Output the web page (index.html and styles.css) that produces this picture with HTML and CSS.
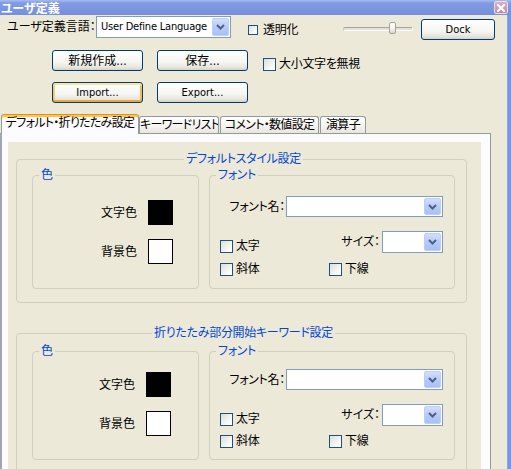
FILE: index.html
```html
<!DOCTYPE html>
<html lang="ja">
<head>
<meta charset="utf-8">
<title>ユーザ定義</title>
<link rel="stylesheet" href="styles.css">
</head>
<body>
<div class="window">
  <div class="titlebar">
    <span class="title">ユーザ定義</span>
    <span class="close"><svg width="8" height="8" viewBox="0 0 8 8"><path d="M1 1L7 7M7 1L1 7" stroke="#fff" stroke-width="2" stroke-linecap="square"/></svg></span>
  </div>
  <div class="frame">
    <div class="client">
      <div class="row row1">
        <span class="lang-lbl">ユーザ定義言語：</span>
        <div class="combo lang-combo"><span class="combo-text en">User Define Language</span><span class="combo-btn"><svg width="9" height="6" viewBox="0 0 9 6"><path d="M1 1l3.5 3.5L8 1" fill="none" stroke="#4D6185" stroke-width="2"/></svg></span></div>
        <label class="chk trans-chk"><span class="box small"></span><span class="chk-text">透明化</span></label>
        <div class="slider"><div class="track"></div><div class="thumb"></div></div>
        <button class="btn en dock">Dock</button>
      </div>
      <div class="row row2">
        <button class="btn first">新規作成...</button>
        <button class="btn">保存...</button>
        <label class="chk case-chk"><span class="box"></span><span class="chk-text">大小文字を無視</span></label>
      </div>
      <div class="row row3">
        <button class="btn en first focused">Import...</button>
        <button class="btn en">Export...</button>
      </div>
      <div class="tabs">
        <div class="tab active">デフォルト・折りたたみ設定</div>
        <div class="tab t2">キーワードリスト</div>
        <div class="tab t3">コメント・数値設定</div>
        <div class="tab t4">演算子</div>
      </div>
      <div class="panel">
        <div class="page">
          <fieldset class="grp outer g1">
            <legend>デフォルトスタイル設定</legend>
            <div class="grp-row">
              <fieldset class="grp color">
                <legend>色</legend>
                <div class="color-row"><span class="color-lbl">文字色</span><span class="swatch black"></span></div>
                <div class="color-row"><span class="color-lbl">背景色</span><span class="swatch white"></span></div>
              </fieldset>
              <fieldset class="grp font">
                <legend>フォント</legend>
                <div class="font-row ra">
                  <span class="fname-lbl">フォント名：</span>
                  <div class="combo fname-combo"><span class="combo-text"></span><span class="combo-btn"><svg width="9" height="6" viewBox="0 0 9 6"><path d="M1 1l3.5 3.5L8 1" fill="none" stroke="#4D6185" stroke-width="2"/></svg></span></div>
                </div>
                <div class="font-row rb">
                  <label class="chk bold-chk"><span class="box"></span><span class="chk-text">太字</span></label>
                  <span class="size-lbl">サイズ：</span>
                  <div class="combo size-combo"><span class="combo-text"></span><span class="combo-btn"><svg width="9" height="6" viewBox="0 0 9 6"><path d="M1 1l3.5 3.5L8 1" fill="none" stroke="#4D6185" stroke-width="2"/></svg></span></div>
                </div>
                <div class="font-row rc">
                  <label class="chk italic-chk"><span class="box"></span><span class="chk-text">斜体</span></label>
                  <label class="chk"><span class="box"></span><span class="chk-text">下線</span></label>
                </div>
              </fieldset>
            </div>
          </fieldset>
          <fieldset class="grp outer g2">
            <legend>折りたたみ部分開始キーワード設定</legend>
            <div class="grp-row">
              <fieldset class="grp color">
                <legend>色</legend>
                <div class="color-row"><span class="color-lbl">文字色</span><span class="swatch black"></span></div>
                <div class="color-row"><span class="color-lbl">背景色</span><span class="swatch white"></span></div>
              </fieldset>
              <fieldset class="grp font">
                <legend>フォント</legend>
                <div class="font-row ra">
                  <span class="fname-lbl">フォント名：</span>
                  <div class="combo fname-combo"><span class="combo-text"></span><span class="combo-btn"><svg width="9" height="6" viewBox="0 0 9 6"><path d="M1 1l3.5 3.5L8 1" fill="none" stroke="#4D6185" stroke-width="2"/></svg></span></div>
                </div>
                <div class="font-row rb">
                  <label class="chk bold-chk"><span class="box"></span><span class="chk-text">太字</span></label>
                  <span class="size-lbl">サイズ：</span>
                  <div class="combo size-combo"><span class="combo-text"></span><span class="combo-btn"><svg width="9" height="6" viewBox="0 0 9 6"><path d="M1 1l3.5 3.5L8 1" fill="none" stroke="#4D6185" stroke-width="2"/></svg></span></div>
                </div>
                <div class="font-row rc">
                  <label class="chk italic-chk"><span class="box"></span><span class="chk-text">斜体</span></label>
                  <label class="chk"><span class="box"></span><span class="chk-text">下線</span></label>
                </div>
              </fieldset>
            </div>
          </fieldset>
        </div>
      </div>
    </div>
    <div class="edge"></div>
  </div>
</div>
</body>
</html>
```

FILE: styles.css
```css
* { box-sizing: border-box; }
html, body { margin: 0; padding: 0; }
body {
  width: 511px;
  height: 469px;
  overflow: hidden;
  background: #ECE9D8;
  color: #000;
  font-family: "DejaVu Sans Condensed", "DejaVu Sans", "Noto Sans CJK JP", sans-serif;
  font-stretch: condensed;
  font-size: 12px;
  line-height: 14px;
  font-feature-settings: "palt" 1;
}
.en { font-size: 11px; }

.window { width: 511px; height: 469px; display: flex; flex-direction: column; }

.titlebar {
  height: 15px;
  flex: none;
  display: flex;
  align-items: center;
  justify-content: space-between;
  background: linear-gradient(#A6BDF0, #809BE1 3px, #7A96DF 60%, #7490DB);
}
.title {
  color: #fff;
  font-weight: bold;
  font-family: "Noto Sans CJK JP", sans-serif;
  font-size: 12px;
  line-height: 15px;
  padding-left: 1px;
}
.close {
  width: 14px;
  height: 13px;
  margin-right: 3px;
  border: 1px solid #EBDCE4;
  border-radius: 2px;
  background: linear-gradient(#D6B4C4, #BE8FA2);
  display: flex;
  align-items: center;
  justify-content: center;
}

.frame { flex: 1; display: flex; min-height: 0; }
.client { width: 507px; flex: none; display: flex; flex-direction: column; }
.edge { flex: 1; background: #7B95DC; border-left: 1px solid #8DA5E4; }

.row { display: flex; align-items: flex-start; flex: none; }
.row1 { height: 35px; padding-top: 1px; }
.row2, .row3 { height: 32px; }

.lang-lbl { margin-left: 7px; margin-top: 4px; width: 89px; white-space: nowrap; }

.combo {
  display: flex;
  border: 1px solid #7F9DB9;
  background: #fff;
  padding: 1px;
}
.combo-text { flex: 1; padding-left: 3px; display: flex; align-items: center; white-space: nowrap; overflow: hidden; }
.combo-btn {
  width: 17px;
  flex: none;
  border: 1px solid #BCCEF6;
  border-radius: 2px;
  background: linear-gradient(#D1DEFD, #B7CAF8 50%, #AAC0F5);
  display: flex;
  align-items: center;
  justify-content: center;
}
.lang-combo { width: 135px; height: 22px; }
.lang-combo .combo-text { letter-spacing: -0.2px; }

.chk { display: flex; align-items: center; white-space: nowrap; height: 14px; }
.box {
  width: 13px;
  height: 13px;
  flex: none;
  border: 1px solid #1C5180;
  background: linear-gradient(135deg, #DCDCD7, #FFFFFF 85%);
}
.box.small { width: 10px; height: 10px; }
.chk-text { margin-left: 3px; letter-spacing: -0.3px; }
.trans-chk { margin-left: 17px; margin-top: 7px; width: 95px; }
.trans-chk .chk-text { margin-left: 5px; }

.slider { position: relative; width: 70px; height: 12px; margin-top: 6px; }
.track {
  margin-top: 5px;
  height: 4px;
  border-radius: 2px;
  border-top: 1px solid #A5A49F;
  border-left: 1px solid #C3C2BD;
  border-bottom: 1px solid #FFFFFF;
  border-right: 1px solid #FFFFFF;
  background: #E3E1D6;
}
.thumb {
  position: absolute;
  left: 46px;
  top: 0;
  width: 7px;
  height: 12px;
  border: 1px solid #A4A39E;
  border-radius: 2px;
  background: linear-gradient(#FFFFFF, #F2F1EC 60%, #D9D7CC);
}

.btn {
  width: 91px;
  height: 21px;
  padding: 0;
  margin: 0;
  border: 1px solid #003C74;
  border-radius: 3px;
  background: linear-gradient(#FFFFFF, #F5F5F1 60%, #E6E3DA 88%, #D6D0C5);
  color: #000;
  font-family: inherit;
  font-stretch: condensed;
  font-size: 12px;
  line-height: 14px;
  font-feature-settings: "palt" 1;
  text-align: center;
}
.btn.en { font-size: 11px; }
.btn.first { margin-left: 52px; margin-right: 14px; }
.btn.focused {
  box-shadow: inset 0 2px 0 #FFE39A, inset 0 -2px 0 #F0A73A, inset 2px 0 0 #F9CB66, inset -2px 0 0 #F5BA4E;
}
.dock { width: 74px; margin-left: 8px; margin-top: 3px; }

.case-chk { margin-left: 15px; margin-top: 7px; }

.tabs { display: flex; align-items: flex-end; height: 19px; margin-left: 1px; flex: none; }
.tab {
  height: 17px;
  border: 1px solid #919B9C;
  border-bottom: none;
  border-radius: 3px 3px 0 0;
  background: linear-gradient(#FFFFFF, #F6F5F1 55%, #E8E5D9);
  line-height: 16px;
  text-align: center;
  white-space: nowrap;
  margin-right: 1px;
  letter-spacing: -0.7px;
  overflow: hidden;
}
.tab.active {
  width: 138px;
  height: 20px;
  margin-right: 0;
  margin-bottom: -1px;
  position: relative;
  z-index: 1;
  border-top: 1px solid #E68B2C;
  box-shadow: inset 0 2px 0 #FFC73C;
  background: #FCFCFE;
  padding-top: 1px;
  line-height: 15px;
}
.t2 { width: 80px; }
.t3 { width: 99px; }
.t4 { width: 46px; }

.panel {
  width: 491px;
  flex: 1;
  min-height: 0;
  border: 1px solid #919B9C;
  border-left: 2px solid #A0A7B1;
  border-bottom: none;
  padding: 8px 9px 0 6px;
  background: #FCFCFE;
}
.page {
  width: 473px;
  height: 100%;
  background: #ECE9D8;
  padding: 10px 0 0 8px;
  overflow: hidden;
}

.grp {
  margin: 0;
  min-width: 0;
  border: 1px solid #D0D0BF;
  border-radius: 4px;
  padding: 0;
}
.grp > legend {
  padding: 0 2px;
  margin-left: 6px;
  line-height: 14px;
  color: #0046D5;
  font-size: 12px;
  letter-spacing: -0.3px;
}
.outer { width: 451px; padding: 2px 11px 13px 15px; }
.outer > legend { margin: 0 auto; }
.g2 { margin-top: 23px; padding-top: 4px; height: 200px; }

.grp-row { display: flex; gap: 10px; }
.color { width: 167px; height: 121px; }
.font { width: 246px; height: 121px; padding-right: 11px; }
.g2 .color, .g2 .font { height: 116px; }

.color-row { display: flex; align-items: center; height: 25px; margin-top: 14px; }
.color-row:first-of-type { margin-top: 18px; }
.color-lbl { width: 104px; text-align: right; margin-right: 11px; }
.g2 .color-row:first-of-type { margin-top: 14px; }
.g2 .color-lbl { width: 102px; }
.swatch { width: 25px; height: 25px; border: 1px solid #000; }
.swatch.black { background: #000; }
.swatch.white { background: #fff; }

.font-row { display: flex; }
.ra { margin-top: 14px; align-items: center; }
.fname-lbl { width: 76px; padding-right: 1px; text-align: right; white-space: nowrap; letter-spacing: -0.3px; }
.fname-combo { width: 157px; height: 21px; }
.rb { margin-top: 14px; align-items: flex-end; }
.bold-chk { margin-left: 10px; }
.size-lbl { margin-left: auto; margin-right: 2px; white-space: nowrap; align-self: center; }
.size-combo { width: 61px; height: 22px; }
.rc { margin-top: 9px; }
.italic-chk { margin-left: 10px; width: 109px; }
.g2 .ra { margin-top: 11px; }
.g2 .rc { margin-top: 8px; }
```
